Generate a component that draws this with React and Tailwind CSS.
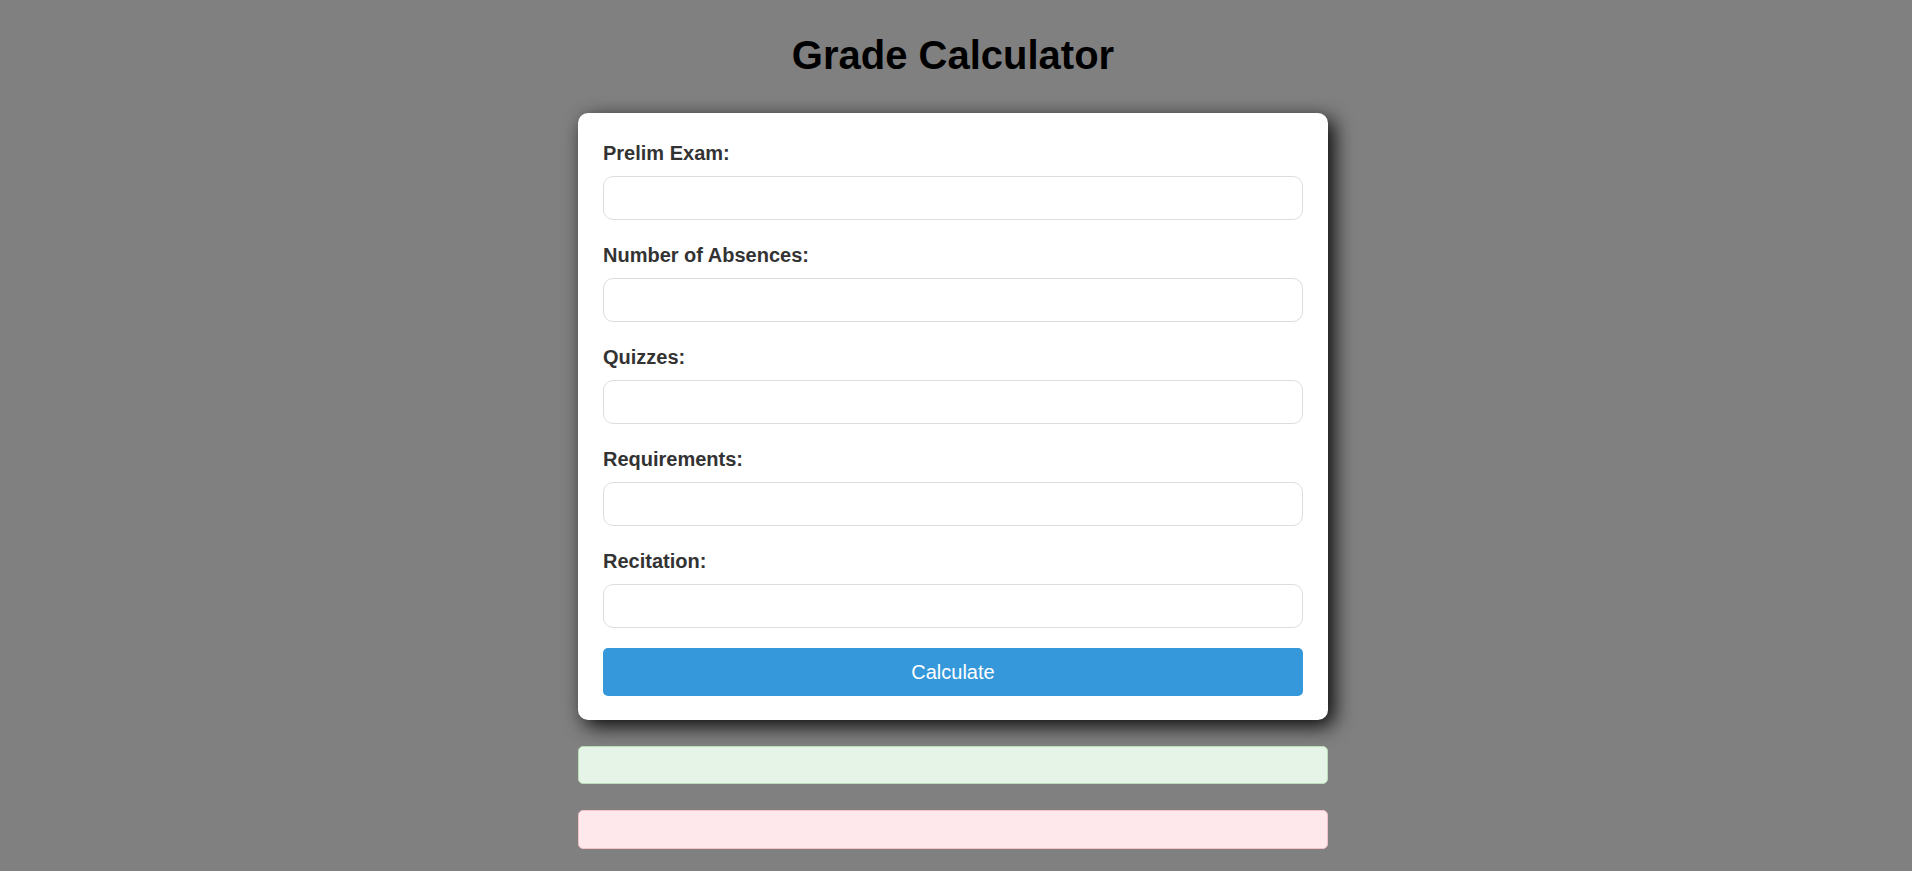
import React from "react";

const fields = [
    "Prelim Exam:",
    "Number of Absences:",
    "Quizzes:",
    "Requirements:",
    "Recitation:",
];

const App = () => {
    return (
        <div
            className="min-h-[871px] bg-[#808080] pr-[6px] pt-[32px]"
            style={{ fontFamily: '"Liberation Sans", Arial, sans-serif' }}
        >
            <h1 className="text-center text-[40px] font-bold leading-[46px] text-black">
                Grade Calculator
            </h1>

            <div className="mx-auto mt-[35px] w-[750px]">
                {/* form card */}
                <div className="rounded-[10px] bg-white px-[25px] pt-[29px] pb-[24px] shadow-[6px_6px_20px_rgba(0,0,0,0.95)]">
                    {fields.map((label) => (
                        <div key={label} className="mb-[24px]">
                            <label className="mb-[11px] block text-[20px] font-bold leading-[23px] text-[#333]">
                                {label}
                            </label>
                            <input
                                type="text"
                                className="block h-[44px] w-full rounded-[10px] border border-[#dddddd] px-3 text-[20px] outline-none"
                            />
                        </div>
                    ))}
                    <button className="-mt-[4px] block h-[48px] w-full rounded-[5px] bg-[#3498db] text-[20px] text-white">
                        Calculate
                    </button>
                </div>

                {/* result boxes */}
                <div className="mt-[26px] h-[38px] rounded-[5px] border border-[#b9dcb9] bg-[#e6f4e7]"></div>
                <div className="mt-[26px] h-[39px] rounded-[5px] border border-[#f3c2c8] bg-[#ffe8eb]"></div>
            </div>
        </div>
    );
};

export default App;
